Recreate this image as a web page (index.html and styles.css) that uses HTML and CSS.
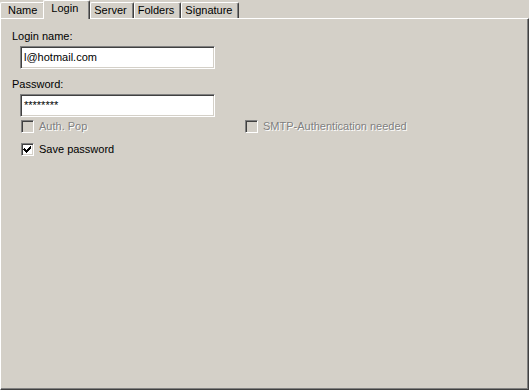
FILE: index.html
```html
<!DOCTYPE html>
<html lang="en">
<head>
  <meta charset="UTF-8">
  <title>Account properties</title>
  <link rel="stylesheet" href="styles.css">
</head>
<body>
  <!-- Tab strip -->
  <div class="tabs">
    <div class="tab tab-first">Name</div>
    <div class="tab tab-active">Login</div>
    <div class="tab">Server</div>
    <div class="tab">Folders</div>
    <div class="tab">Signature</div>
  </div>

  <!-- Login page -->
  <div class="panel">
    <div class="field-label">Login name:</div>
    <div class="textbox">l@hotmail.com</div>

    <div class="field-label second">Password:</div>
    <div class="textbox">********</div>

    <div class="check-row">
      <div class="check disabled auth">
        <span class="box"></span>
        <span class="check-text">Auth. Pop</span>
      </div>
      <div class="check disabled">
        <span class="box"></span>
        <span class="check-text">SMTP-Authentication needed</span>
      </div>
    </div>

    <div class="check-row save">
      <div class="check">
        <span class="box checked">
          <svg width="9" height="9" viewBox="0 0 9 9" shape-rendering="crispEdges">
            <path d="M1 3h1v1h1v1h1v-1h1v-1h1v-1h1v-1h1v3h-1v1h-1v1h-1v1h-1v1h-1v-1h-1v-1h-1v-1h-1z" fill="#000"/>
          </svg>
        </span>
        <span class="check-text">Save password</span>
      </div>
    </div>
  </div>
</body>
</html>
```

FILE: styles.css
```css
/* Whole dialog page */
body {
  margin: 0;
  padding: 0;
  width: 529px;
  height: 390px;
  background: #d4d0c8;
  font-family: "Liberation Sans", Arial, sans-serif;
  font-size: 11px;
  color: #000;
  overflow: hidden;
}

/* Tab strip */
.tabs {
  display: flex;
  align-items: flex-end;
  height: 18px;
}
.tab {
  box-sizing: border-box;
  height: 16px;
  line-height: 14px;
  padding: 0 6px 0 3px;
  border-top: 1px solid #fff;
  border-left: 1px solid #fff;
  border-right: 1px solid #404040;
  box-shadow: inset -1px 0 #808080;
  border-radius: 2px 2px 0 0;
  white-space: nowrap;
}
.tab-first {
  padding-left: 7px;
  padding-right: 7px;
}
.tab-active {
  position: relative;
  z-index: 1;
  height: 19px;
  line-height: 15px;
  margin: 0 0 -1px -2px;
  padding: 0 11px 0 7px;
  background: #d4d0c8;
}

/* Page frame */
.panel {
  box-sizing: border-box;
  height: 372px;
  border-top: 1px solid #fff;
  border-left: 1px solid #fff;
  border-right: 1px solid #404040;
  border-bottom: 1px solid #404040;
  box-shadow: inset -1px -1px #808080;
  padding: 11px 0 0 11px;
}

.field-label {
  height: 13px;
  line-height: 13px;
  margin-bottom: 3px;
}
.field-label.second {
  margin-top: 9px;
}

/* Sunken edit box */
.textbox {
  box-sizing: border-box;
  width: 195px;
  height: 23px;
  margin-left: 8px;
  padding: 3px 0 0 3px;
  background: #fff;
  border-top: 1px solid #808080;
  border-left: 1px solid #808080;
  border-right: 1px solid #fff;
  border-bottom: 1px solid #fff;
  box-shadow: inset 1px 1px #404040, inset -1px -1px #d4d0c8;
  line-height: 14px;
}

/* Checkboxes */
.check-row {
  display: flex;
  margin: 3px 0 0 9px;
  height: 13px;
}
.check-row.save {
  margin-top: 10px;
}
.check {
  display: flex;
  align-items: center;
  gap: 5px;
}
.check.auth {
  width: 224px;
}
.box {
  box-sizing: border-box;
  width: 13px;
  height: 13px;
  display: flex;
  align-items: center;
  justify-content: center;
  background: #fff;
  border-top: 1px solid #808080;
  border-left: 1px solid #808080;
  border-right: 1px solid #fff;
  border-bottom: 1px solid #fff;
  box-shadow: inset 1px 1px #404040, inset -1px -1px #d4d0c8;
}
.check.disabled .box {
  background: #d4d0c8;
}
.check-text {
  line-height: 13px;
  white-space: nowrap;
}
.check.disabled .check-text {
  color: #808080;
  text-shadow: 1px 1px #fff;
}
```
